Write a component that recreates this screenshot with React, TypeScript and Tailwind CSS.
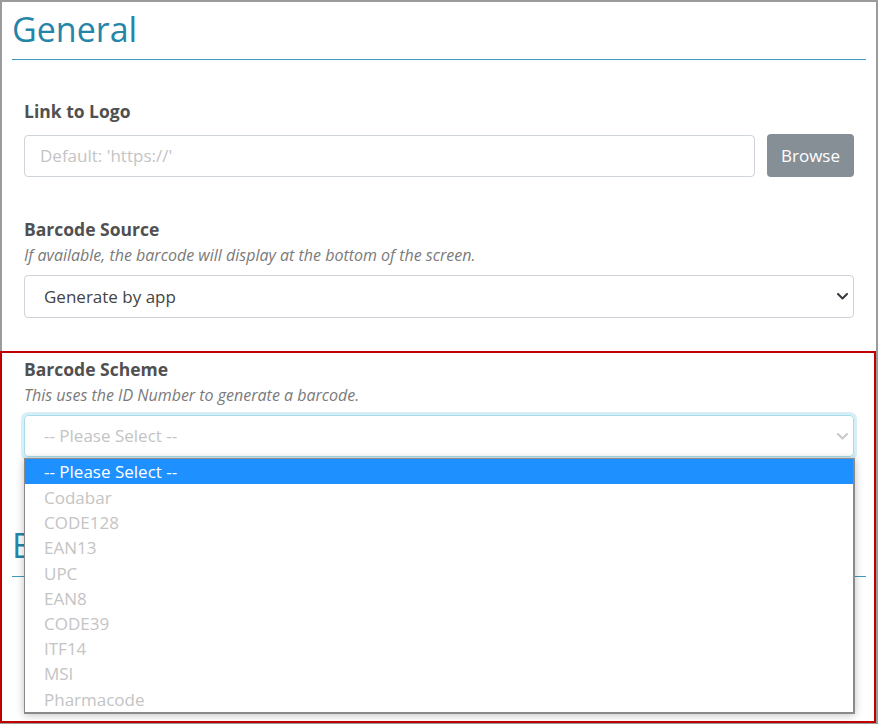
import React from "react";

const Chevron = ({ color }: { color: string }) => (
  <svg width="11" height="7" viewBox="0 0 11 7" className="shrink-0">
    <polyline points="1,1 5.5,5.5 10,1" fill="none" stroke={color} strokeWidth="2" strokeLinecap="round" strokeLinejoin="round" />
  </svg>
);

const options = ["Codabar", "CODE128", "EAN13", "UPC", "EAN8", "CODE39", "ITF14", "MSI", "Pharmacode"];

export default function App() {
  return (
    <div className="relative w-[878px] h-[724px] bg-white border-2 border-[#9b9b9b] font-['Open_Sans',sans-serif]">
      <div className="px-[10px]">
        <h2 className="pt-[6px] pb-[8px] border-b border-[#3f9bbd] text-[34px] leading-[43px] text-[#2585a8] font-normal">General</h2>
        <div className="px-3">
          <div className="mt-[38px] text-[17.5px] leading-[26px] font-bold text-[#505050]">Link to Logo</div>
          <div className="mt-[10px] flex items-end gap-3">
            <div className="flex-1 h-[42px] border border-[#ced4da] rounded-[4px] flex items-center pl-[15px] text-[17px] text-[#c4c4c4]">
              Default: 'https://'
            </div>
            <button className="w-[87px] h-[43px] rounded-[4px] bg-[#868e96] text-white text-[17px]">Browse</button>
          </div>
          <div className="mt-[39px] text-[17.5px] leading-[26px] font-bold text-[#505050]">Barcode Source</div>
          <div className="mt-[2px] text-[16px] leading-[22px] italic text-[#7a7a7a]">If available, the barcode will display at the bottom of the screen.</div>
          <div className="mt-[9px] h-[43px] border border-[#ced4da] rounded-[4px] flex items-center justify-between pl-[19px] pr-[5px] text-[17px] text-[#444]">
            <span>Generate by app</span>
            <Chevron color="#343a40" />
          </div>
          <div className="mt-[38px] text-[17.5px] leading-[26px] font-bold text-[#505050]">Barcode Scheme</div>
          <div className="mt-[2px] text-[16px] leading-[22px] italic text-[#7a7a7a]">This uses the ID Number to generate a barcode.</div>
          <div className="mt-[9px] h-[42px] border border-[#a8dcec] rounded-[4px] shadow-[0_0_0_3px_rgba(120,200,225,0.3)] flex items-center justify-between pl-[19px] pr-[5px] text-[17px] text-[#c4c4c4]">
            <span>-- Please Select --</span>
            <Chevron color="#c8c8c8" />
          </div>
        </div>
        <h2 className="mt-[67px] pb-[9px] border-b border-[#3f9bbd] text-[34px] leading-[43px] text-[#2585a8] font-normal">Branding</h2>
      </div>

      <div className="absolute left-[22px] top-[456px] w-[831px] pb-[1px] bg-white border border-[#8a8a8a] border-r-2 border-b-2 shadow-[0_1px_8px_rgba(0,0,0,0.25)] text-[17px]">
        <div className="h-[25.2px] flex items-center pl-[19px] bg-[#1e90ff] text-white">-- Please Select --</div>
        {options.map((o) => (
          <div key={o} className="h-[25.2px] flex items-center pl-[19px] pt-[2px] text-[#c4c4c4]">{o}</div>
        ))}
      </div>

      <div className="absolute left-[-2px] top-[349px] w-[876px] h-[372px] border-2 border-[#c00000] pointer-events-none" />
    </div>
  );
}
